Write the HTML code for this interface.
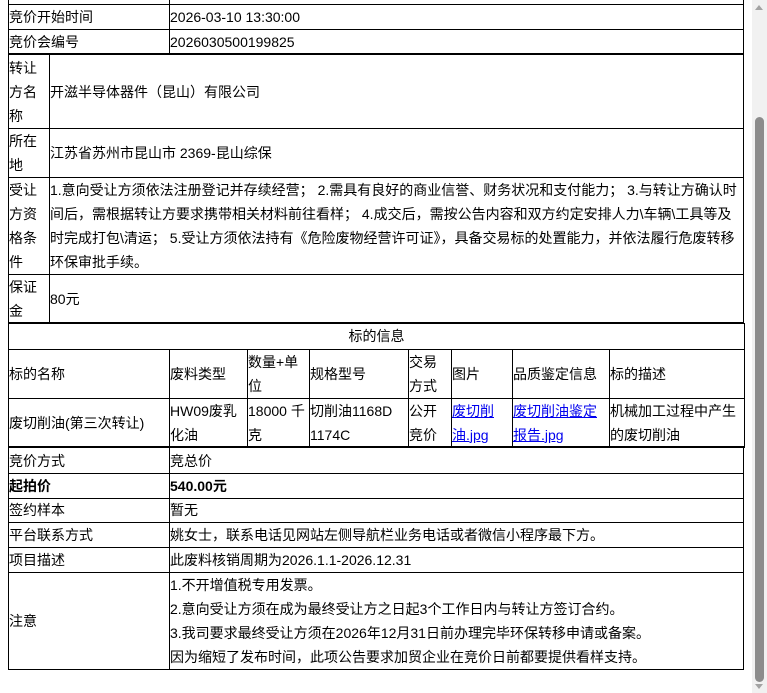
<!DOCTYPE html>
<html><head><meta charset="utf-8"><style>
*{margin:0;padding:0;box-sizing:border-box}
body{width:767px;height:693px;overflow:hidden;background:#fff;position:relative;font-family:"Liberation Sans","Noto Sans CJK SC",sans-serif;font-size:14px;color:#000}
.c{position:absolute;display:flex;align-items:center;padding-left:1px;line-height:24px;overflow:hidden}
.h{position:absolute;background:#000;height:1px}
.v{position:absolute;background:#000;width:1px}
a{color:#00e;text-decoration:underline}
</style></head><body>
<!-- Section A -->
<div class="v" style="left:8px;top:0;height:55px"></div>
<div class="v" style="left:169px;top:0;height:55px"></div>
<div class="v" style="left:743px;top:0;height:55px"></div>
<div class="h" style="left:8px;top:4px;width:736px"></div>
<div class="h" style="left:8px;top:29px;width:736px"></div>
<div class="h" style="left:8px;top:53px;width:736px;height:2px"></div>
<div class="c" style="left:8px;top:4px;width:161px;height:25px">竞价开始时间</div>
<div class="c" style="left:169px;top:4px;width:300px;height:25px">2026-03-10 13:30:00</div>
<div class="c" style="left:8px;top:29px;width:161px;height:25px">竞价会编号</div>
<div class="c" style="left:169px;top:29px;width:300px;height:25px">2026030500199825</div>
<!-- Section B -->
<div class="v" style="left:8px;top:55px;height:269px"></div>
<div class="v" style="left:49px;top:55px;height:269px"></div>
<div class="v" style="left:743px;top:55px;height:269px"></div>
<div class="h" style="left:8px;top:128px;width:736px"></div>
<div class="h" style="left:8px;top:177px;width:736px"></div>
<div class="h" style="left:8px;top:274px;width:736px"></div>
<div class="h" style="left:8px;top:322px;width:736px;height:2px"></div>
<div class="c" style="left:8px;top:55px;width:41px;height:73px">转让方名称</div>
<div class="c" style="left:49px;top:55px;width:690px;height:73px">开滋半导体器件（昆山）有限公司</div>
<div class="c" style="left:8px;top:128px;width:41px;height:49px">所在地</div>
<div class="c" style="left:49px;top:128px;width:690px;height:49px">江苏省苏州市昆山市 2369-昆山综保</div>
<div class="c" style="left:8px;top:177px;width:41px;height:97px">受让方资格条件</div>
<div class="c" style="left:49px;top:177px;width:694px;height:97px">1.意向受让方须依法注册登记并存续经营； 2.需具有良好的商业信誉、财务状况和支付能力； 3.与转让方确认时间后，需根据转让方要求携带相关材料前往看样； 4.成交后，需按公告内容和双方约定安排人力\车辆\工具等及时完成打包\清运； 5.受让方须依法持有《危险废物经营许可证》，具备交易标的处置能力，并依法履行危废转移环保审批手续。</div>
<div class="c" style="left:8px;top:274px;width:41px;height:49px">保证金</div>
<div class="c" style="left:49px;top:274px;width:690px;height:49px">80元</div>
<!-- Section C -->
<div class="v" style="left:8px;top:323px;height:125px"></div>
<div class="v" style="left:744px;top:323px;height:125px"></div>
<div class="h" style="left:8px;top:349px;width:737px"></div>
<div class="h" style="left:8px;top:398px;width:737px"></div>
<div class="h" style="left:8px;top:446px;width:737px;height:2px"></div>
<div class="v" style="left:169px;top:349px;height:98px"></div>
<div class="v" style="left:247px;top:349px;height:98px"></div>
<div class="v" style="left:309px;top:349px;height:98px"></div>
<div class="v" style="left:408px;top:349px;height:98px"></div>
<div class="v" style="left:451px;top:349px;height:98px"></div>
<div class="v" style="left:512px;top:349px;height:98px"></div>
<div class="v" style="left:609px;top:349px;height:98px"></div>
<div class="c" style="left:8px;top:323px;width:736px;height:26px;justify-content:center">标的信息</div>
<div class="c" style="left:8px;top:349px;width:161px;height:49px">标的名称</div>
<div class="c" style="left:169px;top:349px;width:78px;height:49px">废料类型</div>
<div class="c" style="left:247px;top:349px;width:62px;height:49px">数量+单位</div>
<div class="c" style="left:309px;top:349px;width:99px;height:49px">规格型号</div>
<div class="c" style="left:408px;top:349px;width:43px;height:49px"><span>交易<br>方式</span></div>
<div class="c" style="left:451px;top:349px;width:61px;height:49px">图片</div>
<div class="c" style="left:512px;top:349px;width:97px;height:49px">品质鉴定信息</div>
<div class="c" style="left:609px;top:349px;width:135px;height:49px">标的描述</div>
<div class="c" style="left:8px;top:398px;width:161px;height:49px">废切削油(第三次转让)</div>
<div class="c" style="left:169px;top:398px;width:78px;height:49px">HW09废乳化油</div>
<div class="c" style="left:247px;top:398px;width:62px;height:49px">18000 千克</div>
<div class="c" style="left:309px;top:398px;width:99px;height:49px"><span>切削油1168D<br>1174C</span></div>
<div class="c" style="left:408px;top:398px;width:43px;height:49px"><span>公开<br>竞价</span></div>
<div class="c" style="left:451px;top:398px;width:61px;height:49px"><span><a>废切削油.jpg</a></span></div>
<div class="c" style="left:512px;top:398px;width:97px;height:49px"><span><a>废切削油鉴定报告.jpg</a></span></div>
<div class="c" style="left:609px;top:398px;width:135px;height:49px">机械加工过程中产生的废切削油</div>
<!-- Section D -->
<div class="v" style="left:8px;top:448px;height:222px"></div>
<div class="v" style="left:169px;top:448px;height:222px"></div>
<div class="v" style="left:743px;top:448px;height:222px"></div>
<div class="h" style="left:8px;top:473px;width:736px"></div>
<div class="h" style="left:8px;top:498px;width:736px"></div>
<div class="h" style="left:8px;top:522px;width:736px"></div>
<div class="h" style="left:8px;top:547px;width:736px"></div>
<div class="h" style="left:8px;top:572px;width:736px"></div>
<div class="h" style="left:8px;top:669px;width:736px"></div>
<div class="c" style="left:8px;top:448px;width:161px;height:25px">竞价方式</div>
<div class="c" style="left:169px;top:448px;width:574px;height:25px">竞总价</div>
<div class="c" style="left:8px;top:473px;width:161px;height:25px;font-weight:bold">起拍价</div>
<div class="c" style="left:169px;top:473px;width:574px;height:25px;font-weight:bold">540.00元</div>
<div class="c" style="left:8px;top:498px;width:161px;height:24px">签约样本</div>
<div class="c" style="left:169px;top:498px;width:574px;height:24px">暂无</div>
<div class="c" style="left:8px;top:522px;width:161px;height:25px">平台联系方式</div>
<div class="c" style="left:169px;top:522px;width:574px;height:25px">姚女士，联系电话见网站左侧导航栏业务电话或者微信小程序最下方。</div>
<div class="c" style="left:8px;top:547px;width:161px;height:25px">项目描述</div>
<div class="c" style="left:169px;top:547px;width:574px;height:25px">此废料核销周期为2026.1.1-2026.12.31</div>
<div class="c" style="left:8px;top:572px;width:161px;height:97px">注意</div>
<div class="c" style="left:169px;top:572px;width:574px;height:97px"><div>1.不开增值税专用发票。<br>2.意向受让方须在成为最终受让方之日起3个工作日内与转让方签订合约。<br>3.我司要求最终受让方须在2026年12月31日前办理完毕环保转移申请或备案。<br>因为缩短了发布时间，此项公告要求加贸企业在竞价日前都要提供看样支持。</div></div>
<!-- scrollbar -->
<div style="position:absolute;left:752px;top:0;width:15px;height:693px;background:#f1f1f1"></div>
<div style="position:absolute;left:755px;top:117px;width:9px;height:565px;background:#8c8c8c;border-radius:5px"></div>
<div style="position:absolute;left:755px;top:5px;width:0;height:0;border-left:4px solid transparent;border-right:4px solid transparent;border-bottom:5px solid #a3a3a3"></div>
<div style="position:absolute;left:755px;top:684px;width:0;height:0;border-left:4px solid transparent;border-right:4px solid transparent;border-top:5px solid #a3a3a3"></div>
</body></html>
